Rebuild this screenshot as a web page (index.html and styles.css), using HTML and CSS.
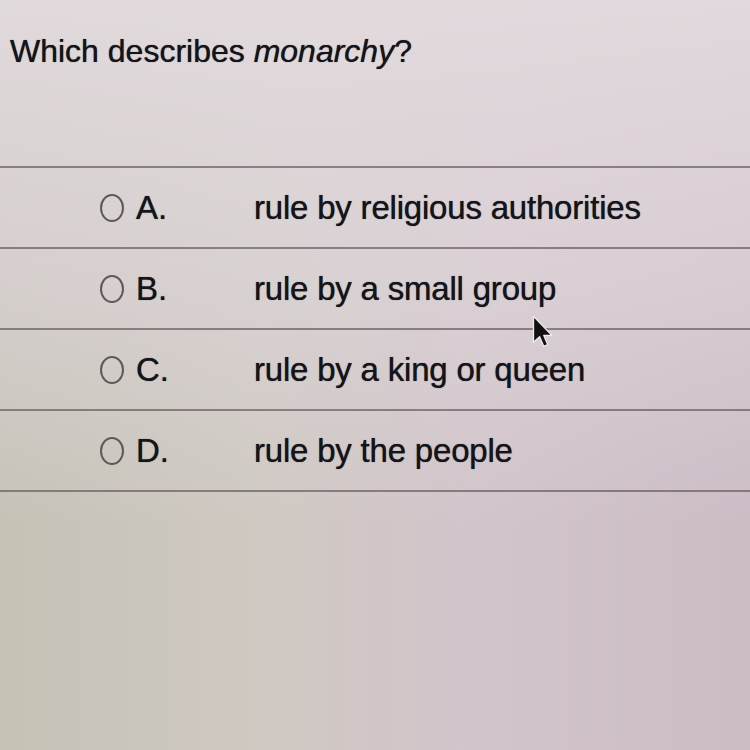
FILE: index.html
```html
<!DOCTYPE html>
<html>
<head>
<meta charset="utf-8">
<link rel="stylesheet" href="styles.css">
</head>
<body>
<div class="page">
  <h1 class="question">Which describes <em>monarchy</em>?</h1>
  <div class="choices">
    <div class="choice"><span class="radio"></span><span class="letter">A.</span><span class="answer">rule by religious authorities</span></div>
    <div class="choice"><span class="radio"></span><span class="letter">B.</span><span class="answer">rule by a small group</span></div>
    <div class="choice"><span class="radio"></span><span class="letter">C.</span><span class="answer">rule by a king or queen</span></div>
    <div class="choice"><span class="radio"></span><span class="letter">D.</span><span class="answer">rule by the people</span></div>
  </div>
  <svg class="cursor" width="22" height="34" viewBox="0 0 16 25">
    <path d="M1 1 L1 20 L5.5 16 L8.5 23 L11.5 21.8 L8.6 15 L14.5 15 Z" fill="#111" stroke="#f2eaee" stroke-width="1" stroke-linejoin="round"/>
  </svg>
</div>
</body>
</html>
```
FILE: styles.css
```css
html, body {
  margin: 0;
  padding: 0;
}
body {
  width: 750px;
  height: 750px;
  overflow: hidden;
  background:
    linear-gradient(180deg, rgba(228,220,224,0.9) 0%, rgba(222,214,218,0.6) 40%, rgba(0,0,0,0) 70%),
    linear-gradient(90deg, #c6c2b6 0%, #cfc9c2 35%, #d2c4cc 65%, #cbbcc6 100%);
  font-family: "Liberation Sans", Arial, sans-serif;
  color: #15141a;
  text-shadow: 0 0 0.8px rgba(20,18,24,0.9);
}
.page {
  position: relative;
  height: 750px;
}
.question {
  margin: 0;
  padding: 31px 0 0 10px;
  font-size: 32px;
  line-height: 40px;
  font-weight: normal;
}
.question em {
  font-style: italic;
}
.choices {
  margin-top: 95px;
  border-top: 2px solid rgba(110,98,102,0.75);
}
.choice {
  display: flex;
  align-items: center;
  height: 79px;
  border-bottom: 2px solid rgba(110,98,102,0.75);
  font-size: 33px;
}
.answer {
  letter-spacing: -0.2px;
}
.radio {
  box-sizing: border-box;
  width: 24px;
  height: 28px;
  margin-left: 100px;
  border: 2px solid #5f595b;
  border-radius: 50%;
}
.letter {
  width: 118px;
  margin-left: 12px;
}
.cursor {
  position: absolute;
  left: 532px;
  top: 315px;
}
```
